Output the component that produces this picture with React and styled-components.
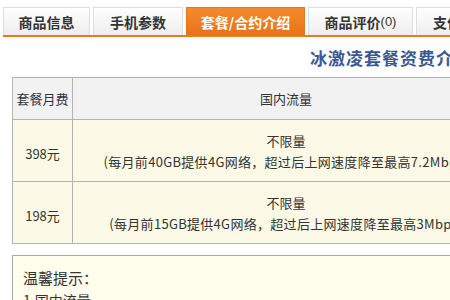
import React from 'react';
import styled, { createGlobalStyle } from 'styled-components';

//////////////////////////////////////////////////
// Global page styles

const GlobalStyle = createGlobalStyle`
  html, body {
    margin: 0;
    padding: 0;
    background: #ffffff;
    overflow: hidden;
  }
  body {
    font-family: "Noto Sans CJK SC", "Liberation Sans", sans-serif;
    color: #333;
  }
`;

const Page = styled.div`
  width: 520px;
  height: 300px;
  overflow: hidden;
`;

// tab bar
const TabBar = styled.div`
  display: flex;
  gap: 3px;
  margin: 7px 0 0 3px;
  border-bottom: 2px solid #e97a1e;
`;

const Tab = styled.div`
  flex: none;
  width: ${props => props.width}px;
  height: 28px;
  box-sizing: border-box;
  display: flex;
  align-items: center;
  justify-content: center;
  font-size: 14px;
  font-weight: 700;
  white-space: nowrap;
  border: 1px solid ${props => (props.active ? '#e6781c' : '#dedede')};
  border-bottom: none;
  color: ${props => (props.active ? '#ffffff' : '#333333')};
  background: ${props =>
    props.active
      ? 'linear-gradient(#f38b2c, #e8721a)'
      : 'linear-gradient(#ffffff, #eeeeee)'};
`;

const Count = styled.span`
  font-weight: 400;
  font-family: "Liberation Sans", sans-serif;
  font-size: 13px;
`;

const Title = styled.h2`
  margin: 0;
  padding: 8px 0 0 310px;
  height: 32px;
  font-size: 17px;
  font-weight: 700;
  letter-spacing: 1px;
  color: #3a5892;
  white-space: nowrap;
`;

// price table
const Table = styled.table`
  margin-left: 12px;
  width: 488px;
  border-collapse: collapse;
  border: 1px solid #a8a8a8;
  font-size: 13px;
`;

const HeadCell = styled.th`
  height: 41px;
  padding: 0;
  font-weight: 400;
  color: #333;
  background: #f2f2f2;
  border: 1px solid #b3b3b3;
  width: ${props => (props.narrow ? '59px' : 'auto')};
  white-space: nowrap;
`;

const Cell = styled.td`
  height: 61px;
  padding: 0;
  text-align: center;
  vertical-align: middle;
  background: #fcfae6;
  border: 1px solid #b3b3b3;
  color: #333;
  white-space: nowrap;
`;

const Price = styled.span`
  display: inline-block;
  padding-top: 6px;
`;

const Line = styled.div`
  line-height: 21px;
  letter-spacing: ${props => (props.wide ? '0.3px' : '0')};
`;

// tips
const Tips = styled.div`
  margin: 11px 0 0 12px;
  width: 488px;
  height: 60px;
  box-sizing: border-box;
  border: 1px solid #a8a8a8;
  background: #fffdeb;
  padding: 11px 10px;
  font-size: 15px;
  color: #333;
`;

const TipLine = styled.div`
  line-height: 22px;
  font-size: ${props => props.size || 15}px;
`;

const plans = [
  { fee: '398元', note: '(每月前40GB提供4G网络，超过后上网速度降至最高7.2Mbps)' },
  { fee: '198元', note: '(每月前15GB提供4G网络，超过后上网速度降至最高3Mbps)' },
];

export default function App() {
  return (
    <Page>
      <GlobalStyle />
      <TabBar>
        <Tab width={87}>商品信息</Tab>
        <Tab width={90}>手机参数</Tab>
        <Tab width={119} active>
          套餐/合约介绍
        </Tab>
        <Tab width={105}>
          商品评价<Count>(0)</Count>
        </Tab>
        <Tab width={90}>支付方式</Tab>
      </TabBar>

      <Title>冰激凌套餐资费介绍</Title>

      <Table>
        <thead>
          <tr>
            <HeadCell narrow>套餐月费</HeadCell>
            <HeadCell>国内流量</HeadCell>
          </tr>
        </thead>
        <tbody>
          {plans.map(plan => (
            <tr key={plan.fee}>
              <Cell>
                <Price>{plan.fee}</Price>
              </Cell>
              <Cell>
                <Line>不限量</Line>
                <Line wide>{plan.note}</Line>
              </Cell>
            </tr>
          ))}
        </tbody>
      </Table>

      <Tips>
        <TipLine>温馨提示：</TipLine>
        <TipLine size={14}>1.国内流量</TipLine>
      </Tips>
    </Page>
  );
}
